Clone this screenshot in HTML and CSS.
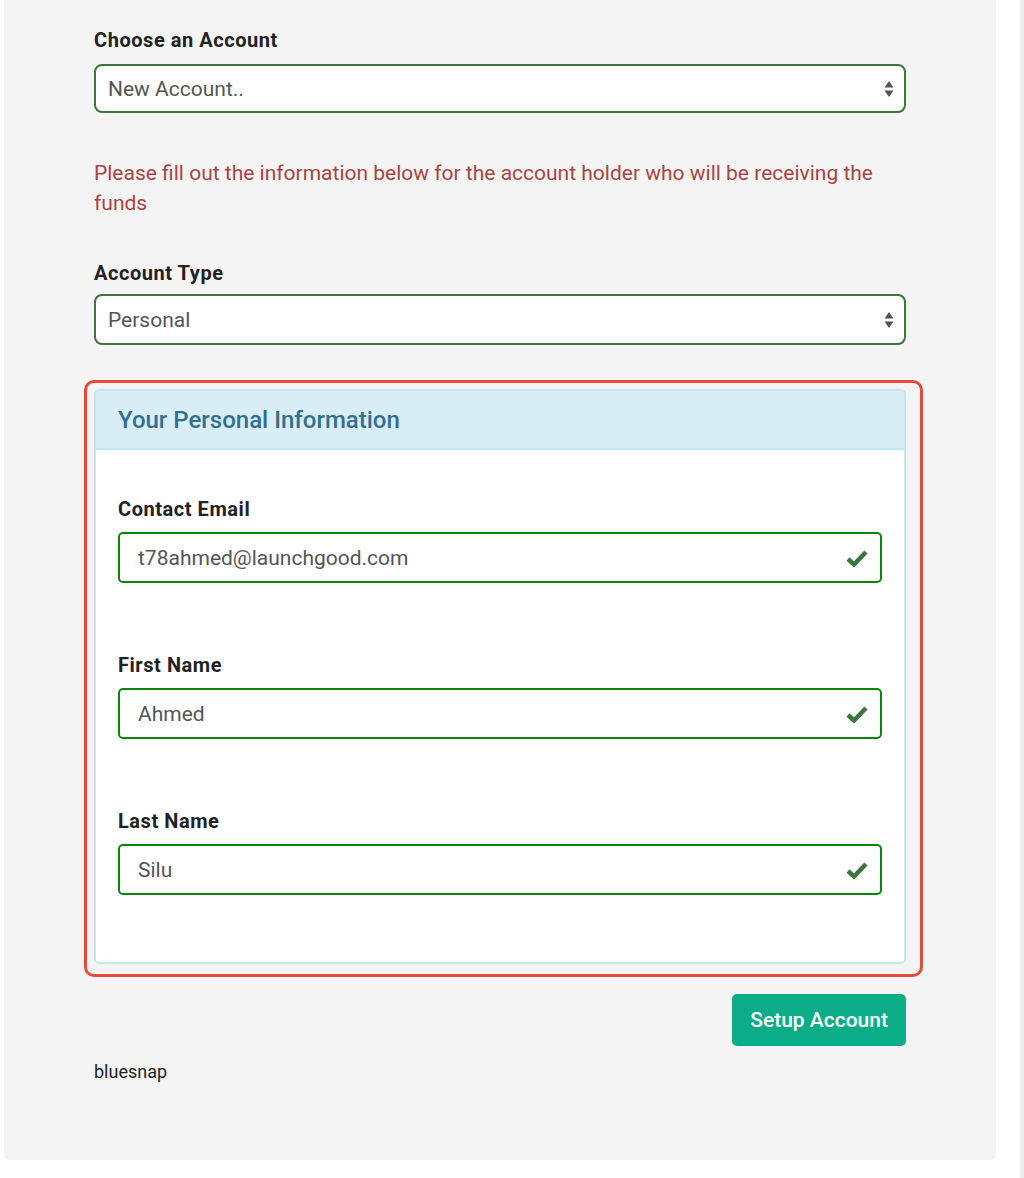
FILE: index.html
```html
<!DOCTYPE html>
<html>
<head>
<meta charset="utf-8">
<link rel="stylesheet" href="styles.css">
</head>
<body>
<div class="page">
  <div class="card">
    <div class="group">
      <div class="label">Choose an Account</div>
      <div class="select"><span>New Account..</span>
        <svg class="arrows" width="10" height="18" viewBox="0 0 10 18"><path d="M5 1 L9.5 7.5 H0.5 Z M5 17 L9.5 10.5 H0.5 Z" fill="#555"/></svg>
      </div>
    </div>
    <p class="notice">Please fill out the information below for the account holder who will be receiving the funds</p>
    <div class="group group-type">
      <div class="label">Account Type</div>
      <div class="select"><span>Personal</span>
        <svg class="arrows" width="10" height="18" viewBox="0 0 10 18"><path d="M5 1 L9.5 7.5 H0.5 Z M5 17 L9.5 10.5 H0.5 Z" fill="#555"/></svg>
      </div>
    </div>
    <div class="highlight">
      <div class="panel">
        <div class="panel-heading">Your Personal Information</div>
        <div class="panel-body">
          <div class="field">
            <div class="label">Contact Email</div>
            <div class="input"><span>t78ahmed@launchgood.com</span>
              <svg class="check" width="22" height="18" viewBox="0 0 22 18"><path d="M2 10 L8 15.5 L20 3" fill="none" stroke="#3c763d" stroke-width="4.5" stroke-linejoin="miter"/></svg>
            </div>
          </div>
          <div class="field">
            <div class="label">First Name</div>
            <div class="input"><span>Ahmed</span>
              <svg class="check" width="22" height="18" viewBox="0 0 22 18"><path d="M2 10 L8 15.5 L20 3" fill="none" stroke="#3c763d" stroke-width="4.5" stroke-linejoin="miter"/></svg>
            </div>
          </div>
          <div class="field">
            <div class="label">Last Name</div>
            <div class="input"><span>Silu</span>
              <svg class="check" width="22" height="18" viewBox="0 0 22 18"><path d="M2 10 L8 15.5 L20 3" fill="none" stroke="#3c763d" stroke-width="4.5" stroke-linejoin="miter"/></svg>
            </div>
          </div>
        </div>
      </div>
    </div>
    <div class="actions"><button class="btn">Setup Account</button></div>
    <div class="footer">bluesnap</div>
  </div>
  <div class="strip"></div>
</div>
</body>
</html>
```

FILE: styles.css
```css
html, body { margin: 0; padding: 0; background: #fff; }
body { font-family: Roboto, "Noto Sans", Arial, sans-serif; color: #333; }
.page { display: flex; height: 1178px; }
.card {
  margin-left: 4px;
  width: 992px;
  height: 1160px;
  box-sizing: border-box;
  background: #f4f4f4;
  border-radius: 0 0 5px 5px;
  padding: 28px 90px 0 90px;
}
.strip { margin-left: auto; width: 4px; background: #ececec; }
.label {
  font-weight: 700;
  font-size: 20px;
  letter-spacing: 0.55px;
  line-height: 24px;
  color: #222;
  margin-bottom: 12px;
}
.select {
  height: 49px;
  box-sizing: border-box;
  background: #fff;
  border: 2px solid #3c763d;
  border-radius: 8px;
  display: flex;
  align-items: center;
  justify-content: space-between;
  padding: 0 10px 0 12px;
  font-size: 21px;
  color: #555;
}
.arrows { display: block; }
.notice { margin: 45px 0 0; font-size: 21px; line-height: 30px; color: #a94442; }
.group-type { margin-top: 43px; }
.group-type .label { margin-bottom: 9px; }
.group-type .select { height: 51px; }
.highlight {
  margin: 35px -17px 0 -10px;
  border: 3px solid #e64a3b;
  border-radius: 10px;
  padding: 6px 14px 10px 7px;
}
.panel {
  border: 2px solid #c5e6ef;
  border-radius: 5px;
  background: #fff;
  overflow: hidden;
}
.panel-heading {
  background: #d9edf7;
  border-bottom: 2px solid #bce8f1;
  color: #31708f;
  font-size: 24px;
  font-weight: 500;
  height: 57px;
  line-height: 59px;
  padding: 0 22px;
}
.panel-body { padding: 47px 22px 67px; }
.field + .field { margin-top: 70px; }
.field .label { margin-bottom: 11px; }
.input {
  height: 51px;
  box-sizing: border-box;
  border: 2px solid #0a850a;
  border-radius: 5px;
  display: flex;
  align-items: center;
  justify-content: space-between;
  padding: 0 12px 0 18px;
  font-size: 21px;
  color: #555;
}
.check { display: block; }
.actions { display: flex; justify-content: flex-end; margin-top: 17px; }
.btn {
  height: 52px;
  background: #0aad87;
  color: #fff;
  border: none;
  border-radius: 5px;
  font-family: Roboto, "Noto Sans", Arial, sans-serif;
  font-size: 21px;
  font-weight: 500;
  padding: 0 18px;
}
.footer { margin-top: 15px; font-size: 18px; line-height: 21px; color: #222; }
```
